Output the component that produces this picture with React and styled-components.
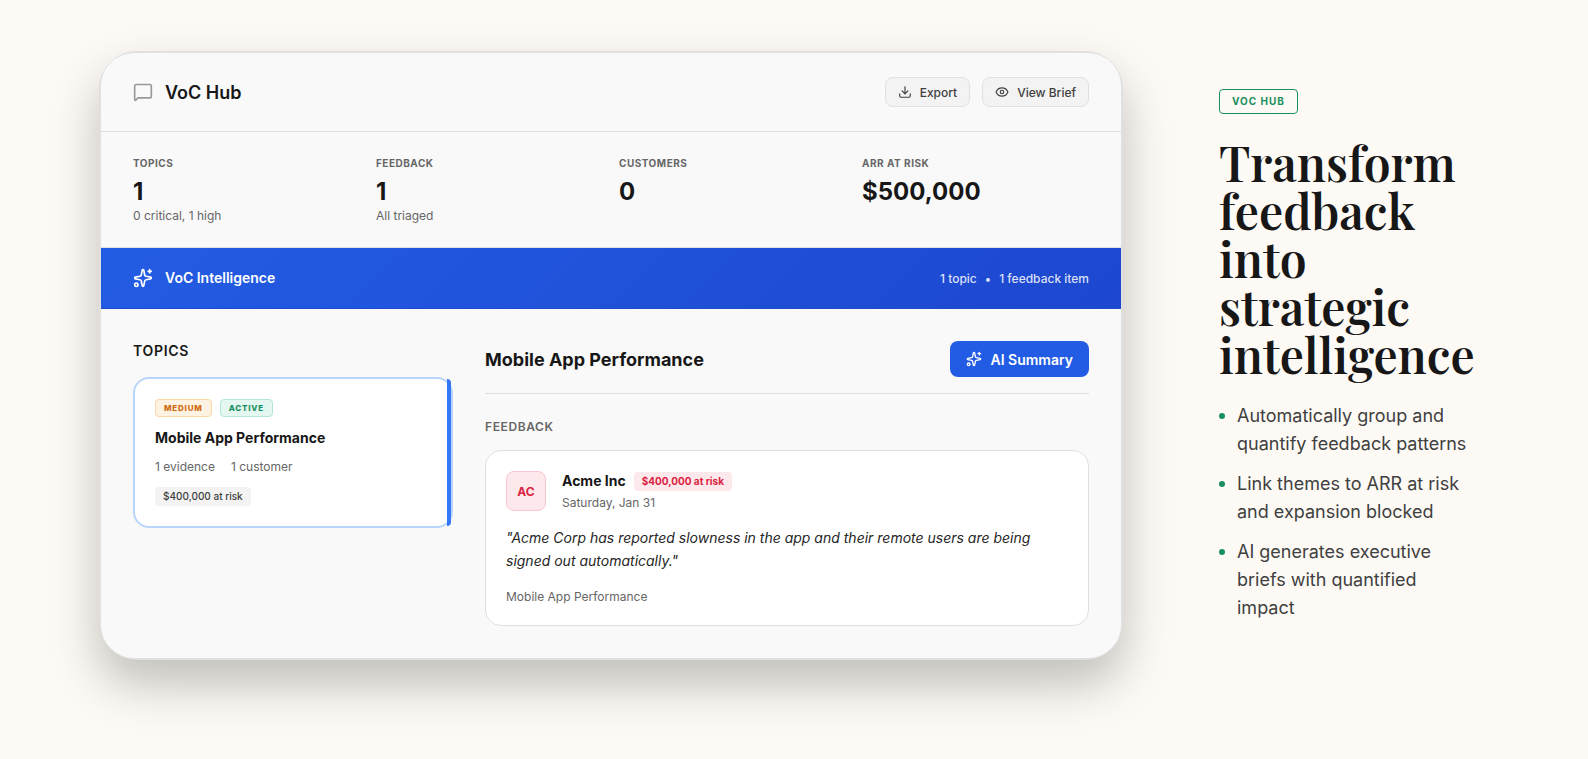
import styled, { createGlobalStyle } from "styled-components";
import { Download, Eye, MessageSquare, Sparkles } from "lucide-react";

const stats = [
  { label: "Topics", value: "1", note: "0 critical, 1 high" },
  { label: "Feedback", value: "1", note: "All triaged" },
  { label: "Customers", value: "0" },
  { label: "ARR at risk", value: "$500,000" },
];

const points = [
  "Automatically group and quantify feedback patterns",
  "Link themes to ARR at risk and expansion blocked",
  "AI generates executive briefs with quantified impact",
];

const App = () => {
  return (
    <>
      <GlobalStyle />
      <Section>
        <Frame>
          <Screen>
            <Header>
              <Brand>
                <MessageSquare size={20} color="#999" />
                <BrandName>VoC Hub</BrandName>
              </Brand>
              <Actions>
                <Button type="button">
                  <Download size={14} />
                  Export
                </Button>
                <Button type="button">
                  <Eye size={14} />
                  View Brief
                </Button>
              </Actions>
            </Header>

            <Stats>
              {stats.map((s) => (
                <div key={s.label}>
                  <StatLabel>{s.label}</StatLabel>
                  <StatValue>{s.value}</StatValue>
                  {s.note ? <Small>{s.note}</Small> : null}
                </div>
              ))}
            </Stats>

            <Banner>
              <BannerTitle>
                <Sparkles size={20} />
                VoC Intelligence
              </BannerTitle>
              <BannerMeta>
                <span>1 topic</span>
                <span>•</span>
                <span>1 feedback item</span>
              </BannerMeta>
            </Banner>

            <Body>
              <div>
                <TopicsTitle>Topics</TopicsTitle>
                <TopicCard>
                  <Badges>
                    <Badge $tone="orange">Medium</Badge>
                    <Badge $tone="green">Active</Badge>
                  </Badges>
                  <TopicName>Mobile App Performance</TopicName>
                  <TopicMeta>
                    <Small>1 evidence</Small>
                    <Small>1 customer</Small>
                  </TopicMeta>
                  <Risk>$400,000 at risk</Risk>
                </TopicCard>
              </div>

              <div>
                <DetailHead>
                  <DetailTitle>Mobile App Performance</DetailTitle>
                  <SummaryButton type="button">
                    <Sparkles size={16} />
                    AI Summary
                  </SummaryButton>
                </DetailHead>
                <DetailLabel>Feedback</DetailLabel>
                <Feedback>
                  <Customer>
                    <Avatar>AC</Avatar>
                    <CustomerInfo>
                      <CustomerName>
                        Acme Inc
                        <Risk $alert>$400,000 at risk</Risk>
                      </CustomerName>
                      <Small>Saturday, Jan 31</Small>
                    </CustomerInfo>
                  </Customer>
                  <Quote>
                    "Acme Corp has reported slowness in the app and their remote
                    users are being signed out automatically."
                  </Quote>
                  <Small>Mobile App Performance</Small>
                </Feedback>
              </div>
            </Body>
          </Screen>
        </Frame>

        <div>
          <Tag>VoC Hub</Tag>
          <Heading>Transform feedback into strategic intelligence</Heading>
          <Points>
            {points.map((p) => (
              <Point key={p}>{p}</Point>
            ))}
          </Points>
        </div>
      </Section>
    </>
  );
};

export default App;

const tones = {
  orange: { text: "#d06a12", bg: "#fef3e2", line: "#fbd9a6" },
  green: { text: "#1a8f60", bg: "#e4f7f0", line: "#b3e8d3" },
};

const GlobalStyle = createGlobalStyle`
  * {
    box-sizing: border-box;
    margin: 0;
    padding: 0;
  }
  body {
    background-color: #fdfaf5;
    color: #171717;
    font-family: Inter, "Liberation Sans", sans-serif;
  }
  button {
    font-family: inherit;
    cursor: pointer;
  }
  svg {
    flex-shrink: 0;
  }
`;

const Section = styled.section`
  min-height: 100vh;
  padding: 51px 113px 99px 99px;
  display: grid;
  grid-template-columns: minmax(0, 1fr) 256px;
  gap: 96px;
  align-items: center;
`;

const Frame = styled.div`
  border: 2px solid #e0e0e0;
  border-radius: 38px;
  background-color: #e0e0e0;
  box-shadow: 0 24px 48px rgba(0, 0, 0, 0.24);
`;
const Screen = styled.div`
  border-radius: 33px;
  background-color: #f9f9f9;
  overflow: hidden;
`;

const Header = styled.header`
  display: flex;
  justify-content: space-between;
  align-items: center;
  padding: 24px 32px;
  border-bottom: 1px solid #e0e0e0;
`;
const Brand = styled.div`
  display: flex;
  align-items: center;
  gap: 12px;
`;
const BrandName = styled.h2`
  font-size: 18px;
  line-height: 27px;
  font-weight: 600;
`;
const Actions = styled.div`
  display: flex;
  gap: 12px;
`;
const Button = styled.button`
  height: 30px;
  padding: 0 12px;
  display: flex;
  align-items: center;
  gap: 8px;
  border: 1px solid #e0e0e0;
  border-radius: 8px;
  background-color: #f3f3f3;
  color: #404040;
  font-size: 12px;
  font-weight: 500;
`;

const Stats = styled.div`
  display: grid;
  grid-template-columns: repeat(4, minmax(0, 1fr));
  gap: 16px;
  padding: 24px 32px 23px;
  border-bottom: 1px solid #e0e0e0;
`;
const StatLabel = styled.p`
  margin-bottom: 5px;
  font-size: 10px;
  line-height: 15px;
  font-weight: 700;
  letter-spacing: 0.05em;
  text-transform: uppercase;
  color: #666;
`;
const StatValue = styled.p`
  font-size: 24px;
  line-height: 32px;
  font-weight: 700;
`;
const Small = styled.p`
  font-size: 12px;
  line-height: 16px;
  color: #666;
`;

const Banner = styled.div`
  display: flex;
  justify-content: space-between;
  align-items: center;
  padding: 20px 32px;
  border-bottom: 1px solid #1d48cf;
  background: linear-gradient(135deg, #235ce4, #1d47cf);
  color: #fff;
`;
const BannerTitle = styled.h3`
  display: flex;
  align-items: center;
  gap: 12px;
  font-size: 14px;
  line-height: 20px;
  font-weight: 600;
`;
const BannerMeta = styled.div`
  display: flex;
  gap: 8px;
  font-size: 12px;
  line-height: 17px;
  font-weight: 500;
  color: rgba(255, 255, 255, 0.85);
`;

const Body = styled.div`
  display: grid;
  grid-template-columns: 320px minmax(0, 1fr);
  gap: 32px;
  padding: 32px;
`;
const TopicsTitle = styled.h3`
  margin-bottom: 16px;
  font-size: 14px;
  line-height: 20px;
  font-weight: 600;
  letter-spacing: 0.05em;
  text-transform: uppercase;
`;
const TopicCard = styled.div`
  position: relative;
  padding: 20px;
  border: 2px solid #bad5fb;
  border-radius: 16px;
  background-color: #fff;

  &::after {
    content: "";
    position: absolute;
    top: 0;
    right: 0;
    bottom: 0;
    width: 4px;
    border-radius: 0 4px 4px 0;
    background-color: #3478f5;
  }
`;
const Badges = styled.div`
  display: flex;
  gap: 8px;
  margin-bottom: 12px;
`;
const Badge = styled.span`
  height: 18px;
  padding: 0 8px;
  border: 1px solid ${({ $tone }) => tones[$tone].line};
  border-radius: 4px;
  background-color: ${({ $tone }) => tones[$tone].bg};
  color: ${({ $tone }) => tones[$tone].text};
  font-size: 8px;
  line-height: 16px;
  font-weight: 800;
  letter-spacing: 0.1em;
  text-transform: uppercase;
`;
const TopicName = styled.h4`
  margin-bottom: 12px;
  font-size: 14px;
  line-height: 18px;
  font-weight: 700;
`;
const TopicMeta = styled.div`
  display: flex;
  gap: 16px;
  margin-bottom: 12px;
`;
const Risk = styled.span`
  display: block;
  width: fit-content;
  padding: 2px 8px;
  border-radius: 4px;
  background-color: ${({ $alert }) => ($alert ? "#fde8eb" : "#f3f3f3")};
  color: ${({ $alert }) => ($alert ? "#db1f42" : "#404040")};
  font-size: 10px;
  line-height: 15px;
  font-weight: ${({ $alert }) => ($alert ? 700 : 500)};
`;

const DetailHead = styled.div`
  display: flex;
  justify-content: space-between;
  align-items: center;
  margin-bottom: 24px;
  padding-bottom: 16px;
  border-bottom: 1px solid #e0e0e0;
`;
const DetailTitle = styled.h3`
  font-size: 18px;
  line-height: 27px;
  font-weight: 700;
`;
const SummaryButton = styled.button`
  height: 36px;
  padding: 0 16px;
  display: flex;
  align-items: center;
  gap: 8px;
  border: 0;
  border-radius: 8px;
  background-color: #235ce4;
  color: #fff;
  font-size: 14px;
  font-weight: 600;
`;
const DetailLabel = styled.h4`
  margin-bottom: 14px;
  font-size: 12px;
  line-height: 18px;
  font-weight: 600;
  letter-spacing: 0.05em;
  text-transform: uppercase;
  color: #666;
`;
const Feedback = styled.article`
  padding: 20px;
  border: 1px solid #e0e0e0;
  border-radius: 16px;
  background-color: #fff;
`;
const Customer = styled.div`
  display: flex;
  align-items: flex-end;
  gap: 16px;
`;
const Avatar = styled.div`
  width: 40px;
  height: 40px;
  display: flex;
  justify-content: center;
  align-items: center;
  border: 1px solid #fbc5cf;
  border-radius: 8px;
  background-color: #fde8eb;
  color: #db1f42;
  font-size: 12px;
  font-weight: 700;
`;
const CustomerInfo = styled.div`
  display: flex;
  flex-direction: column;
  gap: 4px;
`;
const CustomerName = styled.h5`
  display: flex;
  align-items: flex-start;
  gap: 8px;
  font-size: 14px;
  line-height: 18px;
  font-weight: 700;
`;
const Quote = styled.blockquote`
  margin: 15px 0 17px;
  font-size: 14px;
  line-height: 23px;
  font-style: italic;
  color: #262626;
`;

const Tag = styled.p`
  width: fit-content;
  height: 25px;
  padding: 0 12px;
  border: 1px solid #1a8f60;
  border-radius: 4px;
  color: #1a8f60;
  font-size: 10px;
  line-height: 23px;
  font-weight: 700;
  letter-spacing: 0.1em;
  text-transform: uppercase;
`;
const Heading = styled.h1`
  margin: 24px 0;
  font-family: "Playfair Display", "Liberation Serif", serif;
  font-size: 48px;
  line-height: 48px;
  font-weight: 600;
`;
const Points = styled.ul`
  display: flex;
  flex-direction: column;
  gap: 12px;
  list-style: none;
`;
const Point = styled.li`
  display: flex;
  gap: 12px;
  font-size: 18px;
  line-height: 28px;
  color: #404040;

  &::before {
    content: "";
    flex-shrink: 0;
    width: 6px;
    height: 6px;
    margin-top: 11px;
    border-radius: 50%;
    background-color: #1a8f60;
  }
`;
